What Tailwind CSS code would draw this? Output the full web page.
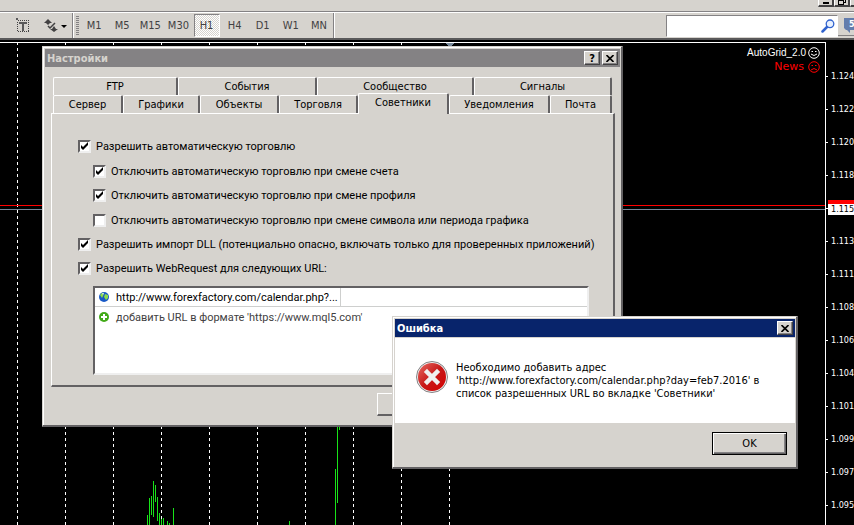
<!DOCTYPE html>
<html lang="ru">
<head>
  <meta charset="UTF-8" />
  <meta name="viewport" content="width=device-width, initial-scale=1.0"/>
  <title>Настройки – Советники</title>
  <script src="https://cdn.jsdelivr.net/npm/@tailwindcss/browser@4"></script>
</head>
<body class="h-screen overflow-hidden flex flex-col bg-black text-black text-[11px] leading-[13px] font-['DejaVu_Sans_Condensed','Noto_Sans',sans-serif]">

  <!-- Menu strip with window buttons -->
  <div class="h-3 shrink-0 bg-[#d6d3ce] border-b border-[#848284] flex justify-end items-start overflow-hidden">
    <button class="w-4 h-[7px] bg-[#d6d3ce] border-l border-r-2 border-b-2 border-l-white border-r-[#424142] border-b-[#424142] flex justify-center items-end" aria-label="Свернуть">
      <svg class="w-2 h-1" viewBox="0 0 8 4"><path d="M1 1h6v2H1z"/></svg>
    </button>
    <button class="w-4 h-[7px] bg-[#d6d3ce] border-l border-r-2 border-b-2 border-l-white border-r-[#424142] border-b-[#424142] flex justify-center items-end" aria-label="Восстановить">
      <svg class="w-[9px] h-[5px]" viewBox="0 0 9 5" fill="none" stroke="#000" shape-rendering="crispEdges"><path d="M1.500 0v4.500h5V0M1 .5h6M8.500 0v2.500H7"/></svg>
    </button>
    <button class="w-1 h-[7px] bg-[#d6d3ce] border-l border-b-2 border-l-white border-b-[#424142]" aria-label="Закрыть"></button>
  </div>

  <!-- Toolbar -->
  <div class="h-7 shrink-0 bg-[#d6d3ce] border-t border-t-white border-b-2 border-b-[#5a595a] flex items-stretch text-[#424142]">
    <div class="w-[73px] flex items-center pl-4 gap-[14px] border-r border-[#848284]">
      <button aria-label="Текст">
        <svg class="w-[14px] h-[15px]" viewBox="0 0 14 15" shape-rendering="crispEdges">
          <path d="M1.500 2.500h11v11h-11z" fill="none" stroke="#424142" stroke-dasharray="1 1"/>
          <path d="M0 0h2v2H0zM3 4h8v2H8v7H6V6H3z" fill="#5a595a"/>
        </svg>
      </button>
      <button aria-label="Стрелки">
        <svg class="w-[23px] h-4" viewBox="0 0 23 16" fill="#424142">
          <path d="M4 1l4 4H6l-2 2-2-2H0zM10 14l-4-3h2l2-3 2 3h2z"/>
          <path d="M4 8l2 2 5-5" fill="none" stroke="#424142" stroke-width="1.500"/>
          <path d="M17 7h6l-3 3z" fill="#000"/>
        </svg>
      </button>
    </div>
    <div class="w-[261px] flex items-stretch border-l border-l-white border-r border-r-[#848284]">
      <div class="w-[3px] my-[3px] ml-[2px] bg-[repeating-linear-gradient(#848284_0_1px,#d6d3ce_1px_2px)]"></div>
      <div class="grow pl-[1px] flex items-stretch">
        <button class="flex-1">M1</button>
        <button class="flex-1">M5</button>
        <button class="flex-1">M15</button>
        <button class="flex-1">M30</button>
        <button class="w-[26px] mx-px my-px border border-t-[#848284] border-l-[#848284] border-r-white border-b-white bg-[repeating-conic-gradient(#fff_0_25%,#d6d3ce_0_50%)] bg-[size:2px_2px]">H1</button>
        <button class="flex-1">H4</button>
        <button class="flex-1">D1</button>
        <button class="flex-1">W1</button>
        <button class="flex-1">MN</button>
      </div>
    </div>
    <div class="grow border-l border-white flex justify-end items-center">
      <label class="w-[172px] h-[22px] bg-white border border-t-[#848284] border-l-[#848284] border-r-white border-b-white flex items-center">
        <input type="text" class="w-0 grow h-full outline-none px-1" aria-label="Поиск" />
        <svg class="w-[14px] h-[14px] mr-[2px]" viewBox="0 0 14 14">
          <path d="M1.500 12.500L6 8" stroke="#3163ce" stroke-width="2.500" stroke-linecap="round"/>
          <circle cx="9" cy="4.800" r="3.800" fill="#e7f0ff" stroke="#3163ce" stroke-width="1.300"/>
        </svg>
      </label>
      <button class="w-4 h-5 border-b border-[#848284] overflow-hidden" aria-label="Сообщения: 5">
        <svg class="w-4 h-[18px]" viewBox="0 0 16 18">
          <path d="M6 2h10v12h-4v3l-3-3H8l-2-2z" fill="#637dad"/>
          <text x="11" y="11" fill="#fff" font-size="9" font-weight="bold">5</text>
        </svg>
      </button>
    </div>
  </div>

  <!-- Chart -->
  <main class="relative grow flex overflow-hidden pt-[2px]">
    <div class="relative grow border-t border-r border-white overflow-hidden">
      <svg class="w-full h-full" shape-rendering="crispEdges">
        <g stroke="#fff" stroke-dasharray="3 3" stroke-dashoffset="1">
          <path d="M17.500 0V500M65.500 0V500M113.500 0V500M161.500 0V500M209.500 0V500M257.500 0V500M305.500 0V500M353.500 0V500M401.500 0V500M449.500 0V500"/>
        </g>
        <path d="M0 162.500H2000" stroke="#f00"/>
        <path d="M0 166.500H2000" stroke="#778899"/>
        <path d="M445 0h9l-4 4h-1z" fill="#778899"/>
        <g stroke="#18e318">
          <path d="M147.500 472V500M149.500 455V500M151.500 453V472M153.500 438V474M155.500 442V459M157.500 454V478M159.500 470V500M161.500 476V500M163.500 475V500M167.500 478V500M169.500 480V500M173.500 465V500"/>
          <path d="M289.500 478V500M335.500 426V500M337.500 380V460M339.500 380V387"/>
        </g>
      </svg>
      <div class="absolute top-[3px] right-[5px] flex flex-col items-end text-white">
        <div class="flex items-center gap-[2px] text-[10px] font-['Liberation_Sans',sans-serif]">AutoGrid_2.0
          <svg class="w-3 h-3" viewBox="0 0 12 12" fill="none" stroke="#fff"><circle cx="6" cy="6" r="5.300"/><path d="M3.500 4.500h1.500M7 4.500h1.500M3 7q3 3 6 0"/></svg>
        </div>
        <div class="flex items-center gap-1 text-[#f00] font-['DejaVu_Sans',sans-serif] h-[15px]">News
          <svg class="w-3 h-3" viewBox="0 0 12 12" fill="none" stroke="#f00"><circle cx="6" cy="6" r="5.300"/><path d="M3.500 4.500h1.500M7 4.500h1.500M3 9q3-3 6 0"/></svg>
        </div>
      </div>
    </div>

    <!-- Price scale -->
    <div class="w-7 shrink-0 pt-[18px] text-white text-[9px] leading-[33px] *:flex *:items-center *:gap-[3px] *:h-[33px] *:before:w-[2px] *:before:h-px *:before:shrink-0 *:before:bg-white">
      <div>1.124</div>
      <div>1.122</div>
      <div>1.120</div>
      <div>1.118</div>
      <div class="relative"><span class="absolute left-[2px] right-0 top-[8px] h-1 bg-[#f00]"></span><span class="absolute left-[2px] right-0 top-3 h-[11px] leading-[11px] pl-[3px] bg-white text-black">1.115</span></div>
      <div>1.113</div>
      <div>1.111</div>
      <div>1.108</div>
      <div>1.106</div>
      <div>1.104</div>
      <div>1.101</div>
      <div>1.099</div>
      <div>1.097</div>
      <div>1.095</div>
    </div>

    <!-- Settings window -->
    <section class="absolute left-[42px] top-[6px] w-[581px] bg-[#d6d3ce] border-l border-t border-r-2 border-b-2 border-l-[#d6d3ce] border-t-[#d6d3ce] border-r-[#636163] border-b-[#636163]">
      <div class="border-l border-t border-white p-px">
        <header class="h-[18px] bg-[#848284] text-[#d6d3ce] font-bold flex items-center gap-[2px] pl-[2px] pr-[2px]">
          <h1 class="grow">Настройки</h1>
          <button class="w-4 h-[14px] bg-[#d6d3ce] text-black border border-white border-r-[#424142] border-b-[#424142] shadow-[inset_-1px_-1px_#848284] flex items-center justify-center" aria-label="Справка">?</button>
          <button class="w-4 h-[14px] bg-[#d6d3ce] border border-white border-r-[#424142] border-b-[#424142] shadow-[inset_-1px_-1px_#848284] flex items-center justify-center" aria-label="Закрыть">
            <svg class="w-2 h-[7px]" viewBox="0 0 8 7" stroke="#000" stroke-width="1.600"><path d="M.5 0l7 7M7.500 0l-7 7"/></svg>
          </button>
        </header>

        <div class="pl-[6px] pr-[5px] pt-[10px]">
          <!-- Tabs -->
          <nav class="px-[2px] text-center">
            <div class="flex *:h-[18px] *:border-l *:border-t *:border-white *:border-r-2 *:border-r-[#636163] *:rounded-t-[2px]">
              <button class="w-[125px]">FTP</button>
              <button class="w-[139px]">События</button>
              <button class="w-[157px]">Сообщество</button>
              <button class="w-[138px]">Сигналы</button>
            </div>
            <div class="flex items-end *:h-[18px] *:border-l *:border-t *:border-white *:border-r-2 *:border-r-[#636163] *:rounded-t-[2px]">
              <button class="w-[70px]">Сервер</button>
              <button class="w-[77px]">Графики</button>
              <button class="w-[79px]">Объекты</button>
              <button class="w-[79px]">Торговля</button>
              <button class="relative w-[91px] pb-[3px] -mt-[2px] -mb-px h-[21px]! bg-[#d6d3ce]">Советники</button>
              <button class="w-[101px]">Уведомления</button>
              <button class="w-[62px]">Почта</button>
            </div>
          </nav>

          <!-- Experts page -->
          <form class="h-[274px] border border-white border-r-2 border-b-2 border-r-[#636163] border-b-[#636163] pl-[26px] pr-6 pt-[26px] flex flex-col whitespace-nowrap font-['Roboto','Noto_Sans',sans-serif]">
            <label class="h-[25px] flex items-start gap-[5px]">
              <span class="grid">
                <input type="checkbox" checked class="peer [grid-area:1/1] appearance-none w-[13px] h-[13px] bg-white border-2 border-t-[#636163] border-l-[#636163] border-r-[#efefef] border-b-[#efefef]" />
                <svg class="[grid-area:1/1] w-[13px] h-[13px] hidden peer-checked:block pointer-events-none" viewBox="0 0 13 13"><path d="M3 5l2 2 5-5v3L5 10 3 8z"/></svg>
              </span>Разрешить автоматическую торговлю
            </label>
            <label class="h-6 ml-[15px] flex items-start gap-[5px]">
              <span class="grid">
                <input type="checkbox" checked class="peer [grid-area:1/1] appearance-none w-[13px] h-[13px] bg-white border-2 border-t-[#636163] border-l-[#636163] border-r-[#efefef] border-b-[#efefef]" />
                <svg class="[grid-area:1/1] w-[13px] h-[13px] hidden peer-checked:block pointer-events-none" viewBox="0 0 13 13"><path d="M3 5l2 2 5-5v3L5 10 3 8z"/></svg>
              </span>Отключить автоматическую торговлю при смене счета
            </label>
            <label class="h-[25px] ml-[15px] flex items-start gap-[5px]">
              <span class="grid">
                <input type="checkbox" checked class="peer [grid-area:1/1] appearance-none w-[13px] h-[13px] bg-white border-2 border-t-[#636163] border-l-[#636163] border-r-[#efefef] border-b-[#efefef]" />
                <svg class="[grid-area:1/1] w-[13px] h-[13px] hidden peer-checked:block pointer-events-none" viewBox="0 0 13 13"><path d="M3 5l2 2 5-5v3L5 10 3 8z"/></svg>
              </span>Отключить автоматическую торговлю при смене профиля
            </label>
            <label class="h-6 ml-[15px] flex items-start gap-[5px]">
              <span class="grid">
                <input type="checkbox" class="peer [grid-area:1/1] appearance-none w-[13px] h-[13px] bg-white border-2 border-t-[#636163] border-l-[#636163] border-r-[#efefef] border-b-[#efefef]" />
                <svg class="[grid-area:1/1] w-[13px] h-[13px] hidden peer-checked:block pointer-events-none" viewBox="0 0 13 13"><path d="M3 5l2 2 5-5v3L5 10 3 8z"/></svg>
              </span>Отключить автоматическую торговлю при смене символа или периода графика
            </label>
            <label class="h-6 flex items-start gap-[5px]">
              <span class="grid">
                <input type="checkbox" checked class="peer [grid-area:1/1] appearance-none w-[13px] h-[13px] bg-white border-2 border-t-[#636163] border-l-[#636163] border-r-[#efefef] border-b-[#efefef]" />
                <svg class="[grid-area:1/1] w-[13px] h-[13px] hidden peer-checked:block pointer-events-none" viewBox="0 0 13 13"><path d="M3 5l2 2 5-5v3L5 10 3 8z"/></svg>
              </span>Разрешить импорт DLL (потенциально опасно, включать только для проверенных приложений)
            </label>
            <label class="h-6 flex items-start gap-[5px]">
              <span class="grid">
                <input type="checkbox" checked class="peer [grid-area:1/1] appearance-none w-[13px] h-[13px] bg-white border-2 border-t-[#636163] border-l-[#636163] border-r-[#efefef] border-b-[#efefef]" />
                <svg class="[grid-area:1/1] w-[13px] h-[13px] hidden peer-checked:block pointer-events-none" viewBox="0 0 13 13"><path d="M3 5l2 2 5-5v3L5 10 3 8z"/></svg>
              </span>Разрешить WebRequest для следующих URL:
            </label>
            <ul class="ml-[15px] h-[89px] bg-white border-2 border-t-[#636163] border-l-[#636163] border-r-[#efefef] border-b-[#efefef]">
              <li class="h-[19px] border-b border-[#cecfce] flex">
                <div class="w-[246px] border-r border-[#cecfce] flex items-center gap-[7px] pl-1">
                  <svg class="w-[10px] h-[10px]" viewBox="0 0 10 10"><circle cx="5" cy="5" r="5" fill="#1859c6"/><path d="M1 3q2-3 4-2L4 4 3 6zM6 2l3 1v3L7 8 5 5z" fill="#8cdb4a"/><path d="M3 1l2 0-1 2z" fill="#cfe8ff"/></svg>
                  http://www.forexfactory.com/calendar.php?...
                </div>
              </li>
              <li class="h-5 flex items-center gap-[7px] pl-1 text-[#424142]">
                <svg class="w-[10px] h-[10px]" viewBox="0 0 10 10"><circle cx="5" cy="5" r="5" fill="#42aa18"/><path d="M5 2v6M2 5h6" stroke="#fff" stroke-width="2"/></svg>
                добавить URL в формате 'https://www.mql5.com'
              </li>
            </ul>
          </form>
        </div>
        <footer class="h-[37px] pt-[6px] pl-[332px]">
          <button class="w-[75px] h-[23px] border border-white border-r-2 border-b-2 border-r-[#636163] border-b-[#636163]" aria-label="OK"></button>
        </footer>
      </div>
    </section>

    <!-- Error message -->
    <section role="alertdialog" aria-labelledby="error-title" class="absolute left-[392px] top-[276px] w-[406px] bg-[#d6d3ce] border-l border-t border-r-2 border-b-2 border-l-[#d6d3ce] border-t-[#d6d3ce] border-r-[#636163] border-b-[#636163]">
      <div class="border-l border-t border-white p-px">
        <header class="h-[18px] bg-[#08246b] text-white font-bold flex items-center pl-[2px] pr-[2px]">
          <h2 id="error-title" class="grow">Ошибка</h2>
          <button class="w-4 h-[14px] bg-[#d6d3ce] border border-white border-r-[#424142] border-b-[#424142] shadow-[inset_-1px_-1px_#848284] flex items-center justify-center" aria-label="Закрыть">
            <svg class="w-2 h-[7px]" viewBox="0 0 8 7" stroke="#000" stroke-width="1.600"><path d="M.5 0l7 7M7.500 0l-7 7"/></svg>
          </button>
        </header>
        <div class="mt-px h-[85px] bg-white flex items-start pt-[23px] pl-[21px] gap-2">
          <svg class="w-8 h-8 shrink-0" viewBox="0 0 32 32">
            <defs><linearGradient id="red" x2="1" y2="1"><stop stop-color="#e86b63"/><stop offset=".5" stop-color="#c61818"/><stop offset="1" stop-color="#d60000"/></linearGradient></defs>
            <circle cx="16" cy="16" r="15.500" fill="#efefef" stroke="#848284"/>
            <circle cx="16" cy="16" r="14" fill="url(#red)"/>
            <path d="M11 11l10 10M21 11L11 21" stroke="#efefef" stroke-width="4.500" stroke-linecap="square"/>
          </svg>
          <p>Необходимо добавить адрес<br>'http://www.forexfactory.com/calendar.php?day=feb7.2016' в<br>список разрешенных URL во вкладке 'Советники'</p>
        </div>
        <footer class="h-[43px] flex justify-end items-start pt-[9px] pr-2">
          <button class="w-[75px] h-[23px] border border-black shadow-[inset_1px_1px_#fff,inset_-1px_-1px_#636163,inset_-2px_-2px_#848284]">OK</button>
        </footer>
      </div>
    </section>
  </main>
</body>
</html>
